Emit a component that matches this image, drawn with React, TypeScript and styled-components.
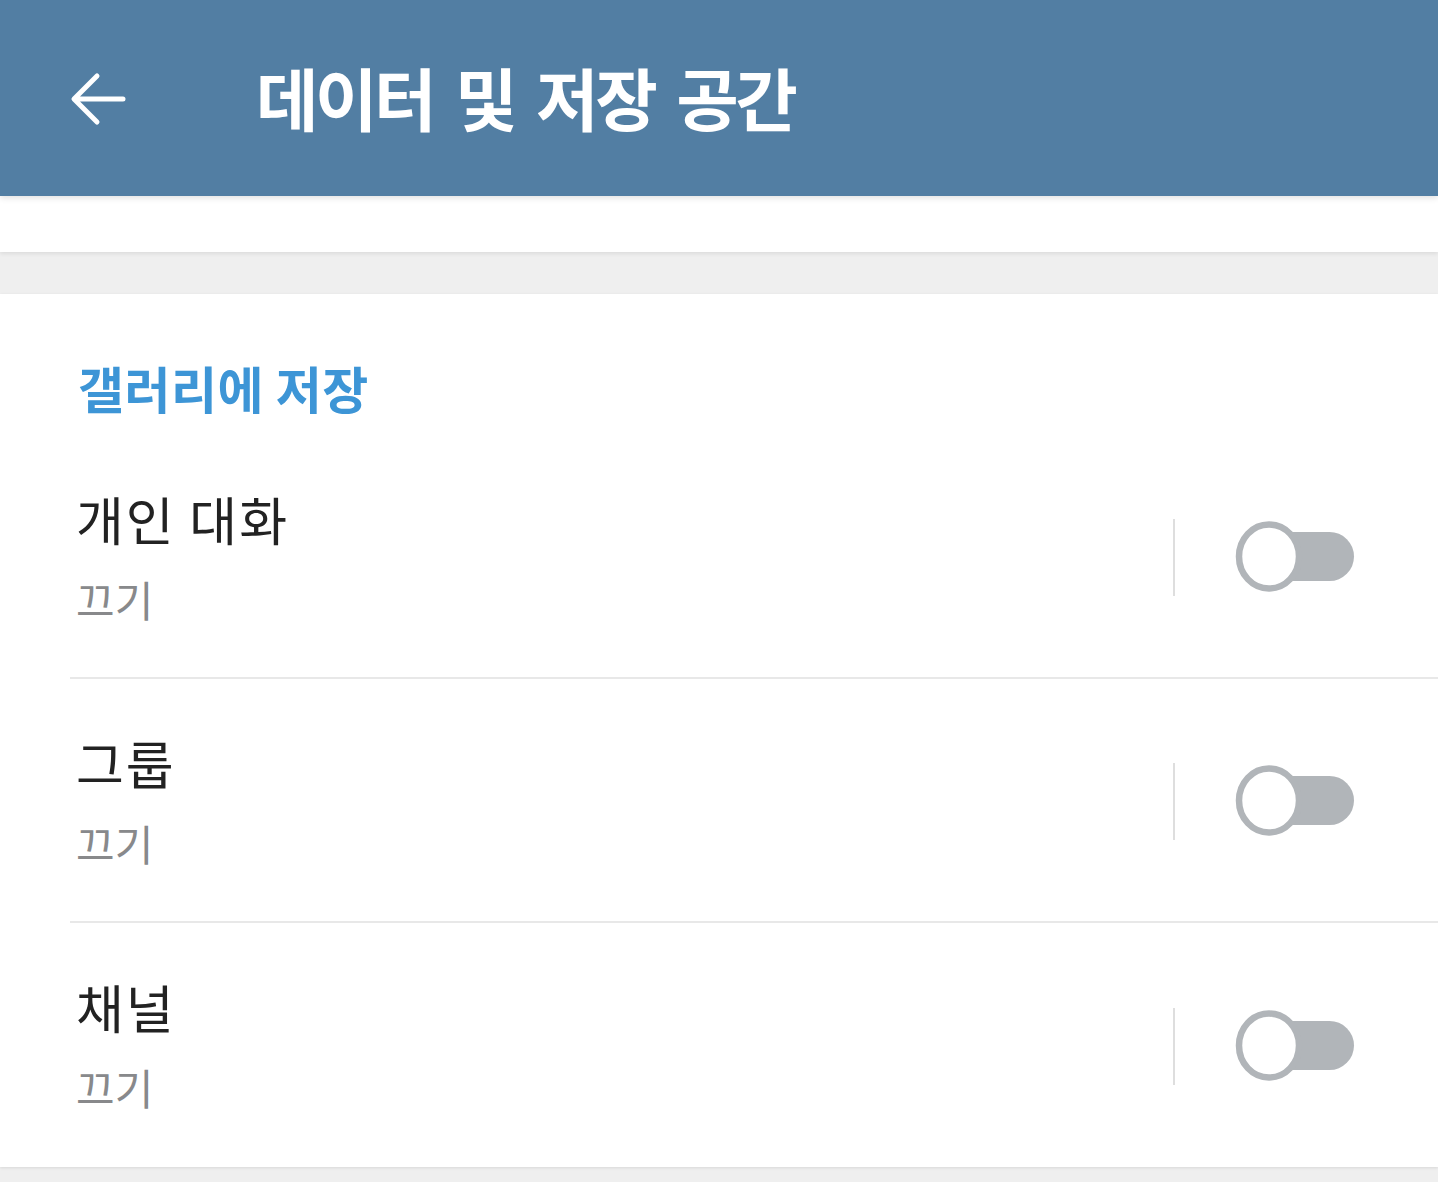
import styled, { createGlobalStyle } from "styled-components";

const GlobalStyle = createGlobalStyle`
  html, body {
    margin: 0;
    padding: 0;
    background: #efefef;
  }
  body {
    font-family: "Noto Sans CJK KR", "Noto Sans", sans-serif;
  }
`;

const Page = styled.div`
  width: 1438px;
  min-height: 1182px;
  background: #efefef;
  overflow: hidden;
`;

const Header = styled.header`
  position: relative;
  z-index: 2;
  height: 196px;
  background: #527ea3;
  display: flex;
  align-items: center;
  padding-left: 70px;
  box-sizing: border-box;
  box-shadow: 0 2px 6px rgba(0, 0, 0, 0.12);
`;

const BackButton = styled.button`
  border: 0;
  background: none;
  padding: 0;
  width: 56px;
  height: 54px;
  display: flex;
  align-items: center;
  justify-content: center;
  margin-top: 2px;
`;

const Title = styled.h1`
  margin: -3px 0 0 130px;
  color: #fff;
  font-size: 68px;
  font-weight: 700;
  letter-spacing: -3.5px;
  word-spacing: 10px;
  line-height: 1;
`;

const TopStrip = styled.div`
  position: relative;
  z-index: 1;
  height: 56px;
  background: #fff;
  box-shadow: 0 2px 4px rgba(0, 0, 0, 0.08);
`;

const Card = styled.section`
  margin-top: 42px;
  background: #fff;
  box-shadow: 0 1px 3px rgba(0, 0, 0, 0.1);
`;

const SectionTitle = styled.h2`
  margin: 0;
  height: 141px;
  box-sizing: border-box;
  padding: 63px 0 0 78px;
  color: #3d95d6;
  font-size: 50px;
  font-weight: 700;
  letter-spacing: 0.5px;
  line-height: 60px;
`;

const Row = styled.div<{ $last?: boolean }>`
  margin-left: 70px;
  height: 244px;
  box-sizing: border-box;
  display: flex;
  align-items: flex-start;
  border-bottom: ${(p) => (p.$last ? "0" : "2px solid #e8e8e8")};
`;

const RowText = styled.div`
  flex: 1;
  padding: 52px 0 0 6px;
`;

const RowTitle = styled.div`
  color: #222;
  font-size: 52px;
  font-weight: 400;
  letter-spacing: 2px;
  line-height: 64px;
`;

const RowValue = styled.div`
  margin-top: 18px;
  color: #88898b;
  font-size: 42px;
  line-height: 60px;
  letter-spacing: 0;
`;

const Separator = styled.div`
  align-self: center;
  width: 2px;
  height: 77px;
  background: #dedede;
  margin-right: 60px;
  margin-top: 2px;
`;

const ToggleWrap = styled.div`
  align-self: center;
  width: 120px;
  height: 72px;
  margin-right: 83px;
  margin-top: 2px;
`;

function Toggle() {
  return (
    <ToggleWrap>
      <svg width="120" height="72" viewBox="0 0 120 72">
        <rect x="22" y="11" width="97" height="49" rx="24.5" fill="#b1b5b9" />
        <ellipse cx="34" cy="35.5" rx="30" ry="32" fill="#fff" stroke="#b1b5b9" strokeWidth="6.5" />
      </svg>
    </ToggleWrap>
  );
}

const rows = [
  { title: "개인 대화", value: "끄기" },
  { title: "그룹", value: "끄기" },
  { title: "채널", value: "끄기" },
];

export default function App() {
  return (
    <Page>
      <GlobalStyle />
      <Header>
        <BackButton aria-label="뒤로">
          <svg width="56" height="54" viewBox="0 0 56 54">
            <path
              d="M53 27 H5 M27 4 L4 27 L27 50"
              fill="none"
              stroke="#fff"
              strokeWidth="5"
              strokeLinecap="round"
              strokeLinejoin="round"
            />
          </svg>
        </BackButton>
        <Title>데이터 및 저장 공간</Title>
      </Header>
      <TopStrip />
      <Card>
        <SectionTitle>갤러리에 저장</SectionTitle>
        {rows.map((r, i) => (
          <Row key={r.title} $last={i === rows.length - 1}>
            <RowText>
              <RowTitle>{r.title}</RowTitle>
              <RowValue>{r.value}</RowValue>
            </RowText>
            <Separator />
            <Toggle />
          </Row>
        ))}
      </Card>
    </Page>
  );
}
